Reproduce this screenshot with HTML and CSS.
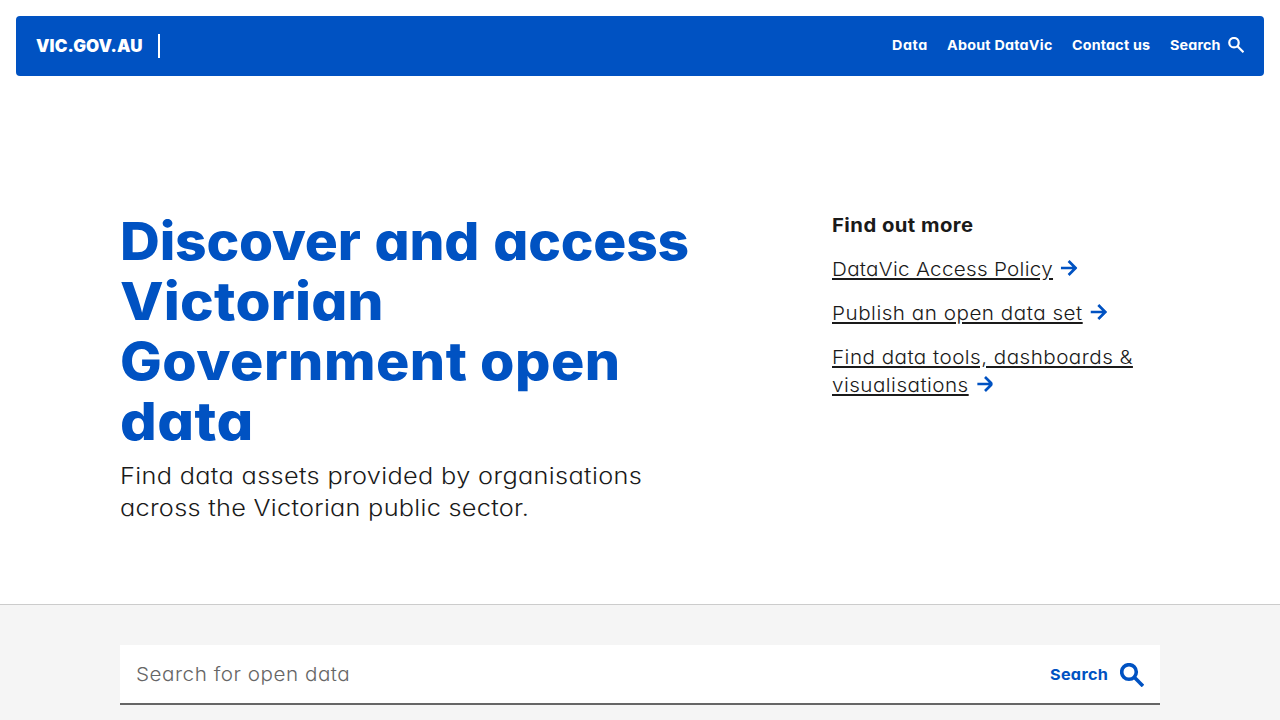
FILE: index.html
```html
<!DOCTYPE html>
<html lang="en">
<head>
<meta charset="utf-8">
<title>DataVic</title>
<link rel="stylesheet" href="styles.css">
</head>
<body>
<header class="header">
  <div class="brand"><span class="brand-name">VIC.GOV.AU</span><span class="brand-divider"></span></div>
  <nav class="nav">
    <a class="nav-link nav-data" href="#"><span>Data</span></a>
    <a class="nav-link nav-about" href="#"><span>About DataVic</span></a>
    <a class="nav-link nav-contact" href="#"><span>Contact us</span></a>
    <a class="nav-link nav-search" href="#"><span>Search</span>
      <svg class="nav-icon" viewBox="0 0 24 24"><circle cx="9" cy="8.6" r="7.1"/><path d="M14.2 13.8l9 9"/></svg>
    </a>
  </nav>
</header>
<main>
  <section class="hero">
    <div class="intro">
      <h1 class="title"><span class="l1">Discover and access</span><span class="l2">Victorian</span><span class="l3">Government open</span><span class="l4">data</span></h1>
      <p class="lead"><span class="p1">Find data assets provided by organisations</span><span class="p2">across the Victorian public sector.</span></p>
    </div>
    <aside class="more">
      <h2 class="more-title">Find out more</h2>
      <ul class="links">
        <li><a class="link k1" href="#">DataVic Access Policy</a><svg class="arrow" viewBox="0 0 16 16" preserveAspectRatio="none"><path d="M0 8h14M7.8 1l7 7-7 7"/></svg></li>
        <li><a class="link k2" href="#">Publish an open data set</a><svg class="arrow" viewBox="0 0 16 16" preserveAspectRatio="none"><path d="M0 8h14M7.8 1l7 7-7 7"/></svg></li>
        <li><a class="link k3" href="#">Find data tools, dashboards &amp;<br>visualisations</a><svg class="arrow" viewBox="0 0 16 16" preserveAspectRatio="none"><path d="M0 8h14M7.8 1l7 7-7 7"/></svg></li>
      </ul>
    </aside>
  </section>
  <section class="search-band">
    <form class="search">
      <input class="search-input" type="text" placeholder="Search for open data">
      <button class="search-button" type="button"><span>Search</span>
        <svg class="search-icon" viewBox="0 0 24 24"><circle cx="9" cy="9" r="7.3"/><path d="M14.3 14.3l8.7 8.7"/></svg>
      </button>
    </form>
  </section>
</main>
</body>
</html>
```
FILE: styles.css
```css
* { box-sizing: border-box; }
body {
  margin: 0;
  height: 720px;
  overflow: hidden;
  background: #fff;
  color: #1a1a1a;
  font-family: Inter, "Open Sans", sans-serif;
  font-feature-settings: "cv11";
}
.header {
  display: flex;
  justify-content: space-between;
  align-items: center;
  height: 60px;
  margin: 16px 16px 0;
  padding: 0 20px;
  border-radius: 4px;
  background: #0052c2;
  color: #fff;
}
.brand { display: flex; align-items: center; }
.brand-name { width: 107px; font-size: 17px; font-weight: 900; letter-spacing: 0.1px; white-space: nowrap; }
.brand-divider { width: 2px; height: 24px; margin-left: 15px; background: #fff; }
.nav { display: flex; gap: 20px; margin-top: -2px; }
.nav-link {
  display: flex;
  align-items: center;
  color: #fff;
  font-size: 13px;
  font-weight: 700;
  line-height: 18px;
  text-decoration: none;
  white-space: nowrap;
}
.nav-link span { transform: scaleX(1.1); transform-origin: 0 0; }
.nav-data { width: 34.5px; letter-spacing: 0.55px; }
.nav-about { width: 105px; letter-spacing: 0.22px; }
.nav-contact { width: 78px; letter-spacing: 0.17px; }
.nav-search { width: 74.5px; justify-content: space-between; letter-spacing: 0.15px; }
.nav-icon { width: 16px; height: 16px; fill: none; stroke: #fff; stroke-width: 3.3; }
.hero {
  display: grid;
  grid-template-columns: 652px 328px;
  column-gap: 60px;
  height: 528px;
  padding: 135px 120px 0;
}
.title {
  margin: 0;
  color: #0052c2;
  font-size: 52.5px;
  font-weight: 800;
  line-height: 60px;
  white-space: nowrap;
}
.title span, .lead span { display: block; transform-origin: 0 0; }
.l1 { word-spacing: 2px; letter-spacing: -0.2px; transform: scaleX(1.05); }
.l2 { letter-spacing: 0.2px; transform: scaleX(1.08); }
.l3 { letter-spacing: 0.45px; transform: scaleX(1.06); }
.l4 { letter-spacing: 0.4px; transform: scaleX(1.1); }
.lead { margin: 9px 0 0; font-size: 22.4px; font-weight: 320; line-height: 32px; white-space: nowrap; }
.lead span { transform: scaleX(1.13); }
.p1 { letter-spacing: 0.3px; }
.p2 { letter-spacing: 0.24px; }
.more-title {
  margin: 0;
  padding-top: 1px;
  font-size: 18.8px;
  font-weight: 700;
  line-height: 28px;
  letter-spacing: 0.42px;
  transform: scaleX(1.08);
  transform-origin: 0 0;
}
.links { display: grid; gap: 16px; margin: 16px 0 0; padding: 0; list-style: none; transform: scaleX(1.1); transform-origin: 0 0; }
.links li { font-size: 18.8px; font-weight: 320; line-height: 28px; white-space: nowrap; }
.link { color: #1a1a1a; text-decoration: underline 2px; text-underline-offset: 2px; }
.k1 { letter-spacing: 0.25px; }
.k2 { letter-spacing: 0.45px; }
.k3 { letter-spacing: 0.41px; }
.arrow { width: 14.55px; height: 16px; margin-left: 7.3px; fill: none; stroke: #0052c2; stroke-width: 2.7; vertical-align: 0; }
.search-band { height: 116px; padding: 40px 120px 0; border-top: 1px solid #ccc; background: #f5f5f5; }
.search { display: flex; height: 60px; border-bottom: 2px solid #666; background: #fff; }
.search-input {
  width: 800px;
  margin-right: 130px;
  padding: 0 14.6px;
  border: 0;
  outline: 0;
  background: none;
  font: 320 18.8px Inter, sans-serif;
  font-feature-settings: "cv11";
  letter-spacing: 0.46px;
  transform: scaleX(1.1);
  transform-origin: 0 0;
}
.search-input::placeholder { color: #666; opacity: 1; }
.search-button {
  display: flex;
  align-items: center;
  justify-content: space-between;
  width: 110px;
  padding: 0 16px 0 0;
  border: 0;
  background: none;
  color: #0052c2;
  font: 700 15px Inter, sans-serif;
  font-feature-settings: "cv11";
  letter-spacing: 0.28px;
}
.search-button span { transform: scaleX(1.08); transform-origin: 0 0; }
.search-icon { width: 24px; height: 24px; margin-top: 2px; fill: none; stroke: #0052c2; stroke-width: 3.6; }
```
